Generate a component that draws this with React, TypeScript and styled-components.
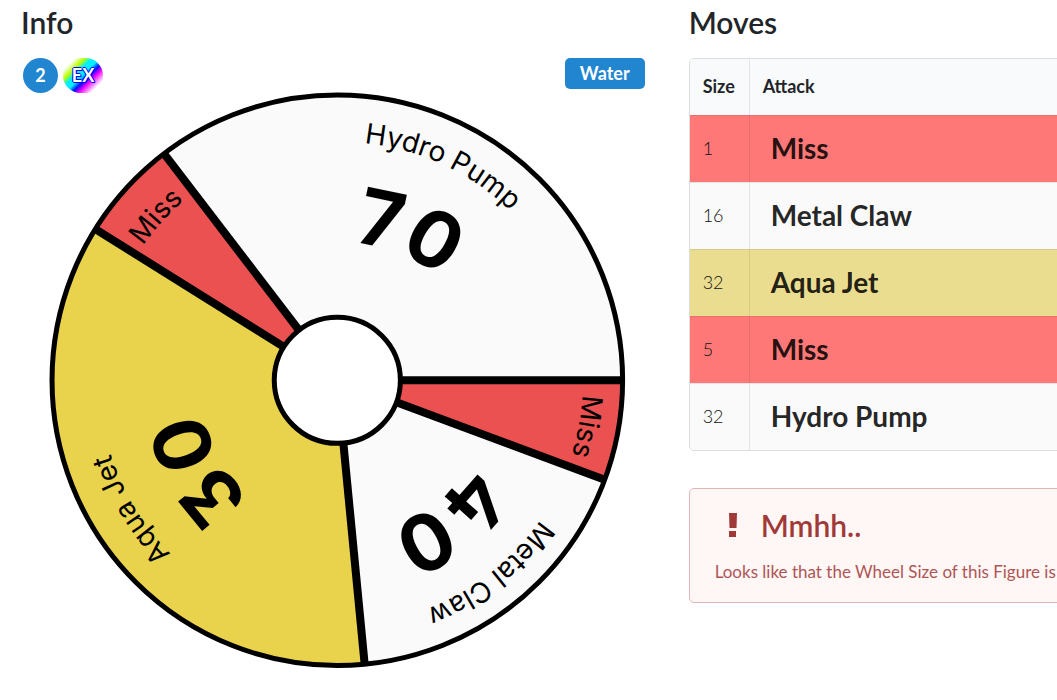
import React from 'react';
import styled, { createGlobalStyle } from 'styled-components';

const GlobalStyle = createGlobalStyle`
  *, *::before, *::after { box-sizing: border-box; }
  body {
    margin: 0;
    background: #fff;
    color: #212529;
    font-family: Lato, "Liberation Sans", sans-serif;
    font-size: 18px;
    line-height: 26px;
    overflow-x: hidden;
  }
`;

const Page = styled.main`
  display: flex;
  gap: 44px;
  padding: 4px 0 24px 21px;
  overflow: hidden;
`;

const Column = styled.section`
  flex: 0 0 59vw;
  min-width: 0;
`;

const Title = styled.h1`
  margin: 0 0 18px;
  font-size: 30px;
  line-height: 36px;
  font-weight: 600;
`;

const BadgeRow = styled.div`
  display: flex;
  align-items: flex-start;
  gap: 5px;
  height: 35px;
  padding-left: 2px;
`;

const Movement = styled.span`
  display: flex;
  align-items: center;
  justify-content: center;
  width: 35px;
  height: 35px;
  padding-bottom: 2px;
  border-radius: 50%;
  background: #2185d0;
  color: #fff;
  font-weight: 700;
`;

const Rarity = styled(Movement)`
  width: 40px;
  border-radius: 18px;
  background: linear-gradient(135deg, #fff 16%, #bf0 29%, #0ef 39%, #0ef 49%, #01f 58%, #e0f 67%, #fff 84%);
  text-shadow: 1px 0 #00f, -1px 0 #00f, 0 1px #00f, 0 -1px #00f, 1px 1px #00f;
`;

const TypeTag = styled.span`
  margin-left: auto;
  padding: 2px 15px 3px;
  border-radius: 5px;
  background: #2185d0;
  color: #fff;
  font-weight: 700;
`;

const WheelSvg = styled.svg`
  display: block;
  width: 100%;
  height: auto;
  overflow: visible;
`;

const WheelName = styled.text`
  font: 400 28px Inter, sans-serif;
  text-anchor: middle;
`;

const WheelDamage = styled.text`
  font: 700 78px Inter, sans-serif;
  font-feature-settings: "cv02", "cv09";
  text-anchor: middle;
`;

const Frame = styled.div`
  border: 1px solid #dcdddd;
  border-radius: 5px;
  overflow: hidden;
`;

const Table = styled.table`
  width: 100%;
  border-collapse: separate;
  border-spacing: 0;
  text-align: left;
`;

const HeadCell = styled.th`
  height: 56px;
  padding: 0 13px 2px;
  background: #f9fafb;
  font-weight: 700;

  & + & { border-left: 1px solid rgba(34, 36, 38, 0.1); }
`;

const Row = styled.tr<{ $tone: string }>`
  background: ${(p) => p.$tone};
`;

const SizeCell = styled.td`
  width: 59px;
  height: 67px;
  padding: 0 13px 2px;
  border-top: 1px solid rgba(34, 36, 38, 0.1);
  font-weight: 300;
  color: #111;
`;

const AttackCell = styled(SizeCell)`
  width: auto;
  padding: 0 21px 2px;
  border-left: 1px solid rgba(34, 36, 38, 0.1);
  color: rgba(0, 0, 0, 0.87);
  font-size: 28px;
  font-weight: 700;
`;

const Message = styled.div`
  margin-top: 37px;
  padding: 18px 25px 17px;
  border: 1px solid #e0b4b4;
  border-radius: 5px;
  background: #fff6f6;
  color: #9f3a38;
`;

const MessageTitle = styled.h2`
  display: flex;
  align-items: center;
  gap: 10px;
  margin: 0 0 16px;
  font-size: 30px;
  line-height: 36px;
  font-weight: 600;
`;

const MessageIcon = styled.svg`
  width: 36px;
  height: 24px;
`;

const MessageText = styled.p`
  margin: 0;
  font-size: 17px;
  font-weight: 400;
  opacity: 0.85;
`;

const CX = 316;
const CY = 287;
const OUTER = 285;
const INNER = 63;
const RED = '#eb5151';
const PALE = '#fafafa';
const GOLD = '#ead34c';

const segments = [
  { name: 'Miss', damage: '', from: 0, to: 20.4, nameAt: 10, damageAt: 10, fill: RED },
  { name: 'Metal Claw', damage: '40', from: 20.4, to: 84.5, nameAt: 52, damageAt: 52, fill: PALE },
  { name: 'Aqua Jet', damage: '30', from: 84.5, to: 212, nameAt: 149, damageAt: 151, fill: GOLD },
  { name: 'Miss', damage: '', from: 212, to: 232.6, nameAt: 222, damageAt: 222, fill: RED },
  { name: 'Hydro Pump', damage: '70', from: 232.6, to: 360, nameAt: 295, damageAt: 292, fill: PALE },
];

const moves = [
  { size: 1, attack: 'Miss', tone: '#ff7878' },
  { size: 16, attack: 'Metal Claw', tone: '#fafafa' },
  { size: 32, attack: 'Aqua Jet', tone: '#ebdd90' },
  { size: 5, attack: 'Miss', tone: '#ff7878' },
  { size: 32, attack: 'Hydro Pump', tone: '#fafafa' },
];

const point = (r: number, deg: number, cx = CX, cy = CY) => {
  const a = (deg * Math.PI) / 180;
  return `${cx + r * Math.cos(a)} ${cy + r * Math.sin(a)}`;
};

// Clockwise arc that text runs along, centred on the given angle.
const arc = (r: number, mid: number, cx: number, cy: number) =>
  `M${point(r, mid - 60, cx, cy)} A${r} ${r} 0 0 1 ${point(r, mid + 60, cx, cy)}`;

function Wheel() {
  return (
    <WheelSvg viewBox="0 0 623 580" role="img" aria-label="Attack wheel">
      {segments.map((s) => (
        <path
          key={s.from}
          d={`M${CX} ${CY} L${point(OUTER, s.from)} A${OUTER} ${OUTER} 0 0 1 ${point(OUTER, s.to)} Z`}
          fill={s.fill}
        />
      ))}
      {segments.map((s) => (
        <path key={s.from} d={`M${CX} ${CY} L${point(OUTER, s.from)}`} stroke="#000" strokeWidth="8" />
      ))}
      <circle cx={CX} cy={CY} r={OUTER} fill="none" stroke="#000" strokeWidth="5" />
      <circle cx={CX} cy={CY} r={INNER} fill="#fff" stroke="#000" strokeWidth="5" />
      {segments.map((s, i) => (
        <g key={s.from}>
          <path id={`name-${i}`} d={arc(241, s.nameAt, CX + 4, CY + 3)} fill="none" />
          <path id={`damage-${i}`} d={arc(145, s.damageAt, CX + 9, CY + 8)} fill="none" />
          <WheelName>
            <textPath href={`#name-${i}`} startOffset="50%">{s.name}</textPath>
          </WheelName>
          {s.damage && (
            <WheelDamage>
              <textPath href={`#damage-${i}`} startOffset="50%">{s.damage}</textPath>
            </WheelDamage>
          )}
        </g>
      ))}
    </WheelSvg>
  );
}

export default function App() {
  return (
    <>
      <GlobalStyle />
      <Page>
        <Column>
          <Title>Info</Title>
          <BadgeRow>
            <Movement>2</Movement>
            <Rarity>EX</Rarity>
            <TypeTag>Water</TypeTag>
          </BadgeRow>
          <Wheel />
        </Column>
        <Column>
          <Title>Moves</Title>
          <Frame>
            <Table>
              <thead>
                <tr>
                  <HeadCell scope="col">Size</HeadCell>
                  <HeadCell scope="col">Attack</HeadCell>
                </tr>
              </thead>
              <tbody>
                {moves.map((m, i) => (
                  <Row key={i} $tone={m.tone}>
                    <SizeCell>{m.size}</SizeCell>
                    <AttackCell>{m.attack}</AttackCell>
                  </Row>
                ))}
              </tbody>
            </Table>
          </Frame>
          <Message role="alert">
            <MessageTitle>
              <MessageIcon viewBox="0 0 36 24" aria-hidden="true">
                <path d="M14 0h8l-.5 15h-7zM14 18h7v6h-7z" fill="currentColor" />
              </MessageIcon>
              Mmhh..
            </MessageTitle>
            <MessageText>Looks like that the Wheel Size of this Figure is</MessageText>
          </Message>
        </Column>
      </Page>
    </>
  );
}
